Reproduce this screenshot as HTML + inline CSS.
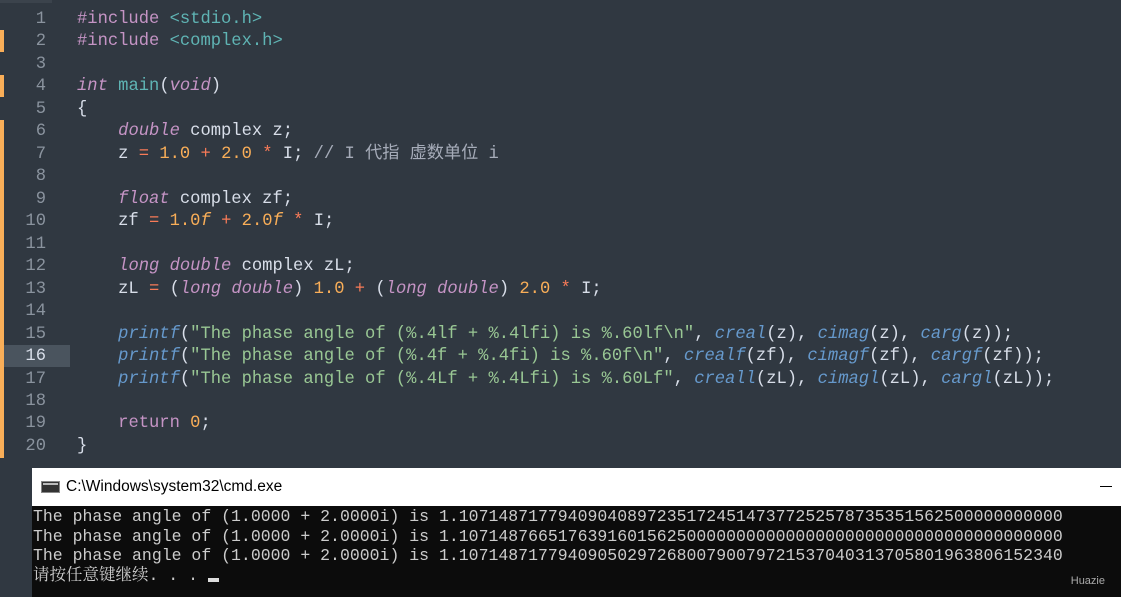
<!DOCTYPE html>
<html><head><meta charset="utf-8"><style>
body{margin:0;width:1121px;height:597px;overflow:hidden;background:#303841;position:relative;font-family:"Liberation Mono","Noto Sans CJK SC",monospace}
.ed{position:absolute;left:0;top:9px;font-size:17.15px;line-height:22.47px;color:#d8dee9}
.l{position:relative;height:22.47px;white-space:pre}
.n{position:absolute;left:0;width:46px;text-align:right;color:#8a939e}
.c{position:absolute;left:77px}
.bar{position:absolute;left:0;width:4px;background:#f9ae58}
.hl{position:absolute;left:4px;width:66px;background:#4a545e}
.k{color:#c594c5;font-style:italic}.p{color:#c594c5}.t{color:#5fb4b4}.o{color:#f97b58}.m{color:#f9ae58}.s{color:#99c794}.f{color:#6699cc;font-style:italic}.cm{color:#a6acb9}
.cmd{position:absolute;left:32px;top:468px;width:1089px;height:129px;background:#0c0c0c}
.tb{height:38px;background:#fff;position:relative;font-family:"Liberation Sans",sans-serif;font-size:15.5px;color:#000}
.out{font-family:"Liberation Mono","Noto Serif CJK SC",monospace;font-size:16.5px;line-height:19.6px;color:#cccccc;white-space:pre;padding-left:1px;margin-top:1px}
</style></head><body>
<div style="position:absolute;left:0;top:0;width:52px;height:3px;background:#3b434c"></div>
<div class="bar" style="top:30px;height:22px"></div>
<div class="bar" style="top:75px;height:22px"></div>
<div class="bar" style="top:120px;height:338px"></div>
<div class="hl" style="top:345px;height:22px"></div>
<div class="ed">
<div class="l"><span class="n">1</span><span class="c"><span class="p">#include</span> <span class="t">&lt;stdio.h&gt;</span></span></div>
<div class="l"><span class="n">2</span><span class="c"><span class="p">#include</span> <span class="t">&lt;complex.h&gt;</span></span></div>
<div class="l"><span class="n">3</span></div>
<div class="l"><span class="n">4</span><span class="c"><span class="k">int</span> <span class="t">main</span>(<span class="k">void</span>)</span></div>
<div class="l"><span class="n">5</span><span class="c">{</span></div>
<div class="l"><span class="n">6</span><span class="c">    <span class="k">double</span> complex z;</span></div>
<div class="l"><span class="n">7</span><span class="c">    z <span class="o">=</span> <span class="m">1.0</span> <span class="o">+</span> <span class="m">2.0</span> <span class="o">*</span> I; <span class="cm">// I 代指 虚数单位 i</span></span></div>
<div class="l"><span class="n">8</span></div>
<div class="l"><span class="n">9</span><span class="c">    <span class="k">float</span> complex zf;</span></div>
<div class="l"><span class="n">10</span><span class="c">    zf <span class="o">=</span> <span class="m">1.0<i>f</i></span> <span class="o">+</span> <span class="m">2.0<i>f</i></span> <span class="o">*</span> I;</span></div>
<div class="l"><span class="n">11</span></div>
<div class="l"><span class="n">12</span><span class="c">    <span class="k">long double</span> complex zL;</span></div>
<div class="l"><span class="n">13</span><span class="c">    zL <span class="o">=</span> (<span class="k">long double</span>) <span class="m">1.0</span> <span class="o">+</span> (<span class="k">long double</span>) <span class="m">2.0</span> <span class="o">*</span> I;</span></div>
<div class="l"><span class="n">14</span></div>
<div class="l"><span class="n">15</span><span class="c">    <span class="f">printf</span>(<span class="s">"The phase angle of (%.4lf + %.4lfi) is %.60lf\n"</span>, <span class="f">creal</span>(z), <span class="f">cimag</span>(z), <span class="f">carg</span>(z));</span></div>
<div class="l"><span class="n" style="color:#d8dee9">16</span><span class="c">    <span class="f">printf</span>(<span class="s">"The phase angle of (%.4f + %.4fi) is %.60f\n"</span>, <span class="f">crealf</span>(zf), <span class="f">cimagf</span>(zf), <span class="f">cargf</span>(zf));</span></div>
<div class="l"><span class="n">17</span><span class="c">    <span class="f">printf</span>(<span class="s">"The phase angle of (%.4Lf + %.4Lfi) is %.60Lf"</span>, <span class="f">creall</span>(zL), <span class="f">cimagl</span>(zL), <span class="f">cargl</span>(zL));</span></div>
<div class="l"><span class="n">18</span></div>
<div class="l"><span class="n">19</span><span class="c">    <span class="p">return</span> <span class="m">0</span>;</span></div>
<div class="l"><span class="n">20</span><span class="c">}</span></div>
</div>
<div class="cmd">
<div class="tb">
<div style="position:absolute;left:9px;top:13px;width:19px;height:12px;background:#333;border:1px solid #888;box-sizing:border-box"><div style="position:absolute;left:1px;top:1px;right:1px;height:2px;background:#bbb"></div></div>
<span style="position:absolute;left:34px;top:10px">C:\Windows\system32\cmd.exe</span>
<div style="position:absolute;left:1068px;top:18px;width:12px;height:1px;background:#000"></div>
</div>
<div class="out">The phase angle of (1.0000 + 2.0000i) is 1.1071487177940904089723517245147377252578735351562500000000000
The phase angle of (1.0000 + 2.0000i) is 1.1071487665176391601562500000000000000000000000000000000000000
The phase angle of (1.0000 + 2.0000i) is 1.1071487177940905029726800790079721537040313705801963806152340
请按任意键继续. . . <span style="display:inline-block;width:11px;height:4px;background:#ddd;vertical-align:-2px"></span></div>
<div style="position:absolute;right:16px;bottom:10px;font-family:'Liberation Sans',sans-serif;font-size:11px;color:#aaa">Huazie</div>
</div>
</body></html>
